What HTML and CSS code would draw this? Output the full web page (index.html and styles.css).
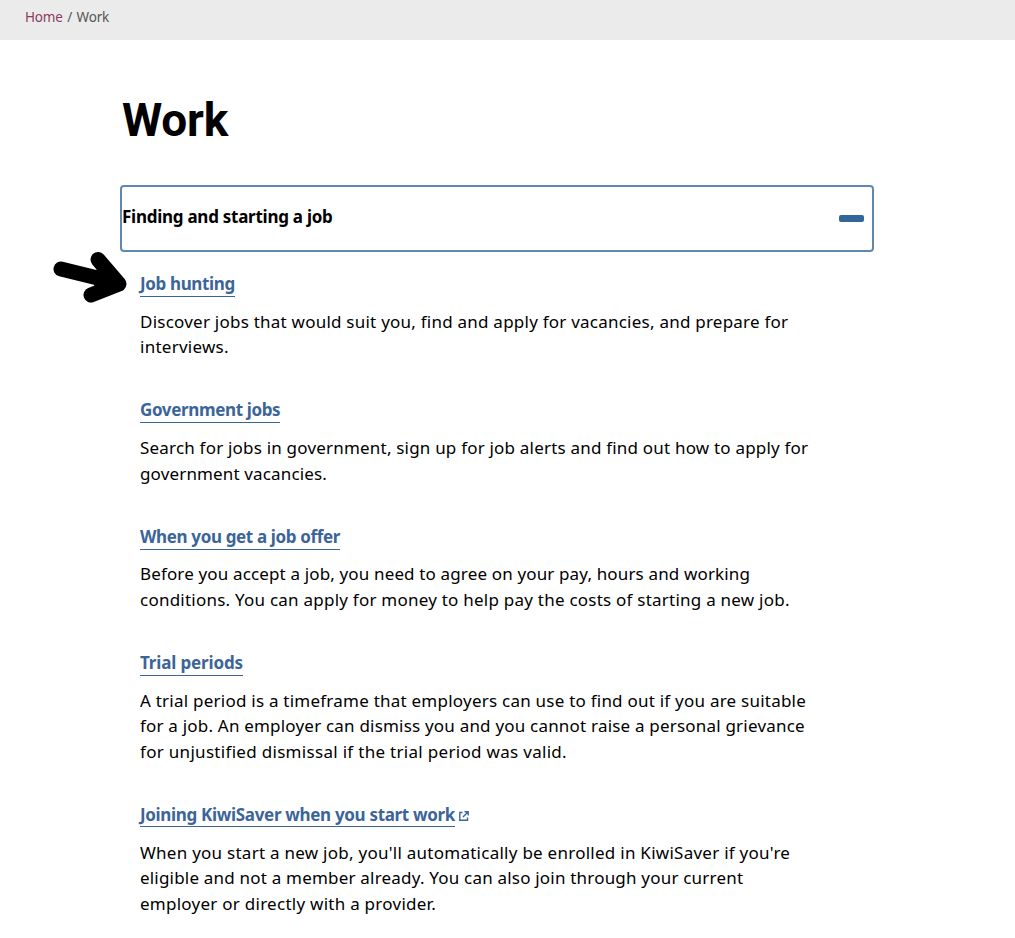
FILE: index.html
```html
<!DOCTYPE html>
<html lang="en">
<head>
<meta charset="utf-8">
<title>Work</title>
<link rel="stylesheet" href="styles.css">
</head>
<body>
<nav class="crumbs"><a class="crumb-link" href="#">Home</a><span class="sep">/</span><span>Work</span></nav>
<main class="page">
<h1 class="title">Work</h1>
<section class="accordion">
<button class="toggle"><span>Finding and starting a job</span><span class="minus"></span></button>
<svg class="arrow" viewBox="0 0 76 54"><path d="M9 19 66 33M46 9.500 67 34 39 45" /><path class="head" d="M50 22 67 33 48 38Z" /></svg>
<div class="topics">
<article class="topic"><h2><a class="snug-3" href="#">Job hunting</a></h2>
<p><span class="track-4">Discover jobs that would suit you, find and apply for vacancies, and prepare for</span> <span class="track-5">interviews.</span></p></article>
<article class="topic"><h2><a class="snug-3" href="#">Government jobs</a></h2>
<p><span class="track-3">Search for jobs in government, sign up for job alerts and find out how to apply for</span> <span class="track-2">government vacancies.</span></p></article>
<article class="topic"><h2><a class="snug-3" href="#">When you get a job offer</a></h2>
<p><span class="track-2">Before you accept a job, you need to agree on your pay, hours and working</span> <span class="track-4">conditions. You can apply for money to help pay the costs of starting a new job.</span></p></article>
<article class="topic"><h2><a class="snug-1" href="#">Trial periods</a></h2>
<p><span class="track-4">A trial period is a timeframe that employers can use to find out if you are suitable</span> <span class="track-3">for a job. An employer can dismiss you and you cannot raise a personal grievance</span> <span class="track-6">for unjustified dismissal if the trial period was valid.</span></p></article>
<article class="topic"><h2><a class="snug-2 external" href="#">Joining KiwiSaver when you start work</a><svg class="ext" viewBox="0 0 10 10"><path d="M3.500 1.500H.8V9.200H8.500V6.500M5.500.8H9.200V4.500M9.200.8 4 6" /></svg></h2>
<p><span class="track-5">When you start a new job, you'll automatically be enrolled in KiwiSaver if you're</span> <span class="track-3">eligible and not a member already. You can also join through your current</span> <span class="track-5">employer or directly with a provider.</span></p></article>
</div>
</section>
</main>
</body>
</html>
```
FILE: styles.css
```css
body { margin: 0; background: #fff; color: #000; font-family: "Noto Sans", sans-serif; }
.crumbs { display: flex; height: 40px; box-sizing: border-box; padding: 6px 25px; background: #ebebeb; color: #555; font-size: 13.5px; line-height: 22px; letter-spacing: -.2px; }
.crumb-link { color: #8b3a62; text-decoration: none; }
.sep { width: 14px; text-align: center; }
.page { width: 754px; margin-left: 120px; }
.title { margin: 0; padding: 48px 2px 32px; font: bold 46px/65px Roboto, sans-serif; letter-spacing: -.2px; }
.accordion { position: relative; }
.toggle { display: flex; justify-content: space-between; align-items: center; width: 100%; height: 67px; padding: 0 8px 5px 0; border: 2px solid #5f88b0; border-radius: 4px; background: #fff; font: bold 17px "Noto Sans", sans-serif; letter-spacing: -.26px; color: #000; }
.minus { width: 25px; height: 7px; margin-top: 5px; border-radius: 2px; background: #336699; }
.arrow { position: absolute; left: -68px; top: 65px; width: 76px; height: 54px; fill: none; stroke: #000; stroke-width: 15; stroke-linecap: round; stroke-linejoin: round; }
.arrow .head { fill: #000; stroke-width: 12; }
.topics { padding: 20px 20px 0; }
.topic { padding-bottom: 38.35px; }
.topic h2 { display: flex; height: 25px; margin: 0 0 11.7px; font-size: 17px; line-height: 24px; }
.topic a { height: 24px; color: #3b6599; text-decoration: none; border-bottom: 1px solid #3b6599; }
.topic .external { height: 22.6px; }
.topic p { margin: 0; font-size: 17px; line-height: 25.65px; }
.topic p span { display: table; white-space: nowrap; }
.snug-1 { letter-spacing: -.14px; }
.snug-2 { letter-spacing: -.323px; }
.snug-3 { letter-spacing: -.36px; }
.track-2 { letter-spacing: .147px; }
.track-3 { letter-spacing: .2px; }
.track-4 { letter-spacing: .233px; }
.track-5 { letter-spacing: .26px; }
.track-6 { letter-spacing: .304px; }
.ext { width: 10px; height: 10px; margin: 8px 0 0 4px; fill: none; stroke: #3b6599; stroke-width: 1.4; }
```
